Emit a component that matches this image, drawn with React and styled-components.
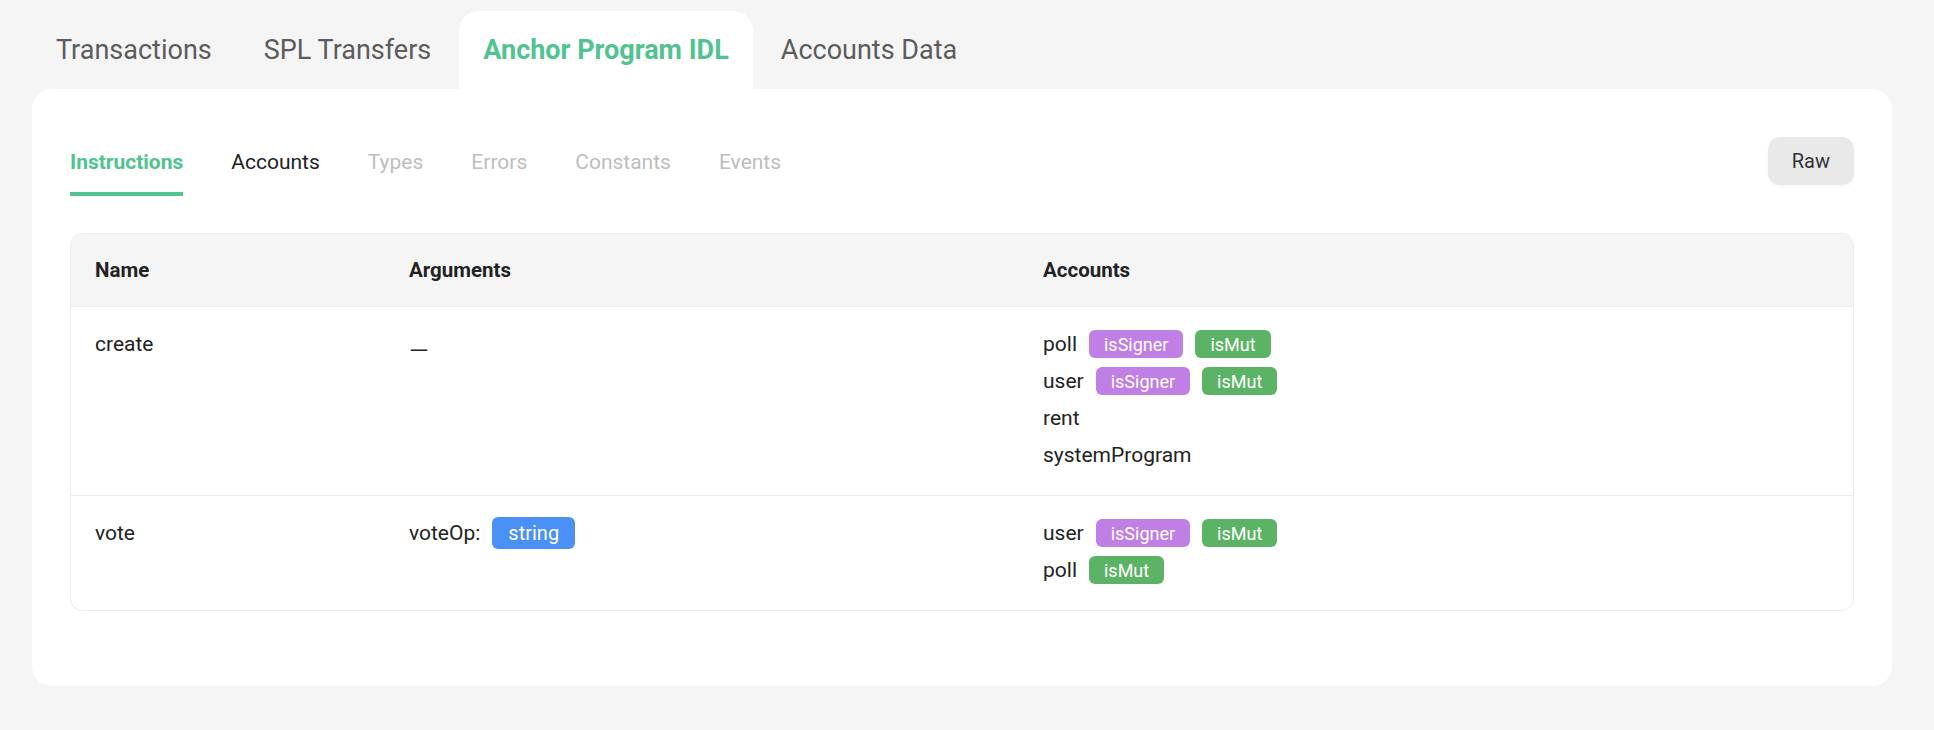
import React from "react";
import styled, { createGlobalStyle } from "styled-components";

const GlobalStyle = createGlobalStyle`
  body {
    margin: 0;
    background: #f5f5f5;
    font-family: Roboto, "Liberation Sans", sans-serif;
    color: #222;
  }
`;

const instructions = [
  {
    name: "create",
    args: [],
    accounts: [
      { name: "poll", signer: true, mut: true },
      { name: "user", signer: true, mut: true },
      { name: "rent" },
      { name: "systemProgram" },
    ],
  },
  {
    name: "vote",
    args: [{ name: "voteOp", type: "string" }],
    accounts: [
      { name: "user", signer: true, mut: true },
      { name: "poll", mut: true },
    ],
  },
];

const mainTabs = ["Transactions", "SPL Transfers", "Anchor Program IDL", "Accounts Data"];
const subTabs = [
  { label: "Instructions", state: "active" },
  { label: "Accounts", state: "normal" },
  { label: "Types", state: "disabled" },
  { label: "Errors", state: "disabled" },
  { label: "Constants", state: "disabled" },
  { label: "Events", state: "disabled" },
];

const App = () => {
  return (
    <Page>
      <GlobalStyle />
      <TabBar>
        {mainTabs.map((t) => (
          <MainTab key={t} $active={t === "Anchor Program IDL"}>
            {t}
          </MainTab>
        ))}
      </TabBar>

      <Card>
        <Toolbar>
          <SubTabs>
            {subTabs.map((t) => (
              <SubTab key={t.label} $state={t.state}>
                {t.label}
              </SubTab>
            ))}
          </SubTabs>
          <RawButton>Raw</RawButton>
        </Toolbar>

        <Table>
          <HeadRow>
            <HeadCell>Name</HeadCell>
            <HeadCell>Arguments</HeadCell>
            <HeadCell>Accounts</HeadCell>
          </HeadRow>
          {instructions.map((ix) => (
            <Row key={ix.name}>
              <Cell>
                <Line>{ix.name}</Line>
              </Cell>
              <Cell>
                {ix.args.length === 0 ? (
                  <Line>
                    <Dash>—</Dash>
                  </Line>
                ) : (
                  ix.args.map((a) => (
                    <Line key={a.name}>
                      {a.name}:<TypeBadge>{a.type}</TypeBadge>
                    </Line>
                  ))
                )}
              </Cell>
              <Cell>
                {ix.accounts.map((acc) => (
                  <Line key={acc.name}>
                    {acc.name}
                    {acc.signer && <Badge $kind="signer">isSigner</Badge>}
                    {acc.mut && <Badge $kind="mut">isMut</Badge>}
                  </Line>
                ))}
              </Cell>
            </Row>
          ))}
        </Table>
      </Card>
    </Page>
  );
};

const Page = styled.div`
  padding: 11px 42px 44px 32px;
`;

const TabBar = styled.div`
  display: flex;
  gap: 4px;
`;

const MainTab = styled.div`
  height: 78px;
  display: flex;
  align-items: center;
  padding: 0 24px;
  font-size: 27px;
  border-radius: 20px 20px 0 0;
  color: ${({ $active }) => ($active ? "#50c391" : "#5c5c5c")};
  font-weight: ${({ $active }) => ($active ? 700 : 400)};
  background: ${({ $active }) => ($active ? "#fff" : "transparent")};
`;

const Card = styled.div`
  background: #fff;
  border-radius: 20px;
  padding: 38px 38px 75px;
`;

const Toolbar = styled.div`
  display: flex;
  align-items: center;
  justify-content: space-between;
  margin-bottom: 37px;
`;

const SubTabs = styled.div`
  display: flex;
  gap: 48px;
`;

const SubTab = styled.div`
  font-size: 21px;
  line-height: 24px;
  padding: 23px 0 18px;
  border-bottom: 4px solid
    ${({ $state }) => ($state === "active" ? "#50c391" : "transparent")};
  font-weight: ${({ $state }) => ($state === "active" ? 700 : 400)};
  color: ${({ $state }) =>
    $state === "active" ? "#50c391" : $state === "disabled" ? "#bdbdbd" : "#222"};
`;

const RawButton = styled.button`
  border: none;
  background: #e9e9e9;
  border-radius: 12px;
  height: 48px;
  padding: 0 24px;
  margin-top: -2px;
  font-family: inherit;
  font-size: 20px;
  color: #333;
  box-shadow: 0 2px 3px rgba(0, 0, 0, 0.04);
`;

const Table = styled.div`
  border: 1px solid #ececec;
  border-radius: 12px;
  overflow: hidden;
`;

const HeadRow = styled.div`
  display: grid;
  grid-template-columns: 314px 634px 1fr;
  background: #f5f5f5;
  height: 72px;
  align-items: center;
  border-bottom: 1px solid #ececec;
`;

const HeadCell = styled.div`
  padding: 0 24px;
  font-size: 20.5px;
  font-weight: 700;
  color: #222;
`;

const Row = styled.div`
  display: grid;
  grid-template-columns: 314px 634px 1fr;
  & + & {
    border-top: 1px solid #ececec;
  }
`;

const Cell = styled.div`
  padding: 23px 24px 26px;
  display: flex;
  flex-direction: column;
  gap: 9px;
  font-size: 21px;
  color: #222;
`;

const Line = styled.div`
  display: flex;
  align-items: center;
  height: 28px;
`;

const Dash = styled.span`
  display: inline-block;
  transform: translateY(7px) scaleX(1.2);
  transform-origin: left;
`;

const Badge = styled.span`
  display: inline-flex;
  align-items: center;
  height: 28px;
  padding: 0 15px;
  margin-left: 12px;
  border-radius: 6px;
  font-size: 18px;
  color: #fff;
  background: ${({ $kind }) => ($kind === "signer" ? "#bf7fe4" : "#5cb366")};
`;

const TypeBadge = styled.span`
  display: inline-flex;
  align-items: center;
  height: 32px;
  padding: 0 16px;
  margin-left: 12px;
  border-radius: 6px;
  font-size: 20px;
  color: #fff;
  background: #4a90f5;
`;

export default App;
